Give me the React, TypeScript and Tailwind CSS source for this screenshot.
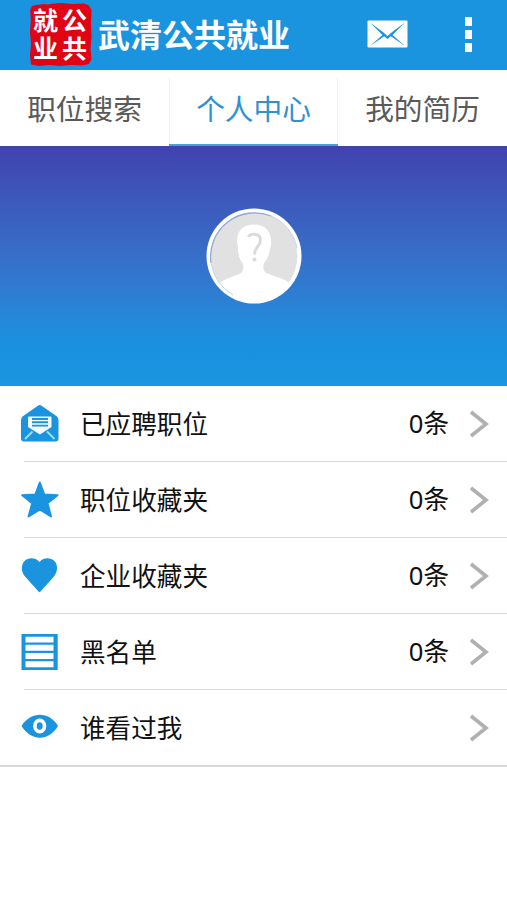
import type { ReactNode } from 'react';

const BLUE = '#1b94e0';

function SealLogo() {
  return (
    <div className="relative -mt-[2px] h-[64px] w-[64px] shrink-0">
      <svg className="absolute inset-0" width="64" height="64" viewBox="0 0 64 64">
        <path
          d="M7 3L15 2L19 2.600L23 1.800L32 1L44 2L55 1.500L60 3.500L62.500 8L62 22L62.500 35L61.500 47L62.500 57L60 62L53 63.500L42 63L31 64L20 63L10 64L2 62.500L1 53L2 42L1 30L1.800 18L1.200 8L3 4Z"
          fill="#e00414"
        />
      </svg>
      <div className="relative grid w-[60px] grid-cols-[25px_25px] gap-x-[4px] pl-[4px] pt-[3px] text-[25px] font-bold leading-[28px] text-white">
        <span>就</span>
        <span>公</span>
        <span>业</span>
        <span>共</span>
      </div>
    </div>
  );
}

function Avatar() {
  return (
    <svg width="96" height="96" viewBox="0 0 96 96">
      <defs>
        <clipPath id="face">
          <circle cx="48" cy="48" r="44" />
        </clipPath>
      </defs>
      <circle cx="48" cy="48" r="47.500" fill="#fff" />
      <circle cx="48" cy="48" r="43.500" fill="#e1e1e1" />
      <g clipPath="url(#face)">
        <path
          d="M48 16.500C37 16.500 31 23 31 33C31 36 32 38 32 41C32 49 35 53 37 56C38 60 37 64 34 65.500C27 69 19 70 14 75L6 96H92L82 74C77 70 66 68 60 65C57 63 57 58 58 55C61 52 63 47 64 41C65 38 65 36 65 33C65 23 59 16.500 48 16.500Z"
          fill="#fff"
        />
      </g>
      <path d="M5 55A44 44 0 0 1 65 8" fill="none" stroke="#91a9d8" strokeWidth="1.300" />
      <path d="M65 8A44 44 0 0 1 91 40M5 55A44 44 0 0 0 27 87" fill="none" stroke="#c3d5ee" strokeWidth="1" />
      <path
        d="M42.500 29C43.500 25 54.500 24.500 54.500 32C54.500 38.500 48.500 39 48.500 46.500"
        fill="none"
        stroke="#dadada"
        strokeWidth="3"
      />
      <circle cx="48.500" cy="51.500" r="2" fill="#dadada" />
    </svg>
  );
}

const icons: Record<string, ReactNode> = {
  letter: (
    <svg width="40" height="40" viewBox="0 0 40 40">
      <path d="M17.500 2Q19.700 .1 22 2L37 12.500Q38.500 14 38.500 16.500V34.500Q38.500 37.500 35.500 37.500H4Q1 37.500 1 34.500V16.500Q1 14 2.500 12.500Z" fill={BLUE} />
      <path d="M8 13.500Q8 12.500 9 12.500H30.500Q31.500 12.500 31.500 13.500V23L20 30.500L8 23Z" fill="#f4fbff" />
      <path d="M12 15H28M12 18.300H28M12 21.600H28" stroke={BLUE} strokeWidth="1.900" />
      <path d="M5 35L12.500 27.500M34.500 35L27 27.500" stroke="#9be0ff" strokeWidth="1.800" />
    </svg>
  ),
  star: (
    <svg width="40" height="40" viewBox="0 0 40 40">
      <path
        d="M19.800 2.500L24.300 14.500L37.500 15.300L27.500 23.300L31 36.500L19.800 29.500L8.600 36.500L12.200 23.300L2.200 15.300L15.300 14.500Z"
        fill={BLUE}
        stroke={BLUE}
        strokeWidth="2"
        strokeLinejoin="round"
      />
    </svg>
  ),
  heart: (
    <svg width="40" height="40" viewBox="0 0 40 40">
      <path
        d="M19.500 6.500C16.500 1.800 8.500 1.300 4.500 5.500C.5 10 1.200 17 5.500 21.500L18.700 36.300Q19.500 37.200 20.300 36.300L33.500 21.500C37.500 17 38.500 10 34.500 5.500C30.500 1.300 22.500 1.800 19.500 6.500Z"
        transform="translate(0 -.5)"
        fill={BLUE}
      />
    </svg>
  ),
  list: (
    <svg width="40" height="40" viewBox="0 0 40 40">
      <path d="M1.500 2H37.700V38H1.500Z" fill={BLUE} />
      <path d="M5.500 4.800H33.500V10.600H5.500ZM5.500 12.800H33.500V18.800H5.500ZM5.500 21H33.500V27H5.500ZM5.500 29.200H33.500V35.300H5.500Z" fill="#fff" />
    </svg>
  ),
  eye: (
    <svg width="40" height="40" viewBox="0 0 40 40">
      <path d="M1.500 18C11 3 29 3 38 18C29 33.500 11 33.500 1.500 18Z" fill={BLUE} />
      <ellipse cx="19.700" cy="18" rx="4.800" ry="5.600" fill={BLUE} stroke="#fff" strokeWidth="3.600" />
    </svg>
  ),
};

const rows = [
  { icon: 'letter', label: '已应聘职位', count: 0 },
  { icon: 'star', label: '职位收藏夹', count: 0 },
  { icon: 'heart', label: '企业收藏夹', count: 0 },
  { icon: 'list', label: '黑名单', count: 0 },
  { icon: 'eye', label: '谁看过我', count: null },
];

export default function App() {
  return (
    <div className="flex h-[900px] w-[507px] flex-col overflow-hidden bg-white font-['Noto_Sans_CJK_SC',sans-serif]">
      <header className="flex h-[70px] shrink-0 items-center bg-[#1b94e0] pl-[29px] pr-[35px]">
        <SealLogo />
        <h1 className="ml-[5px] pb-[3px] text-[32px] font-bold leading-[67px] text-white">武清公共就业</h1>
        <svg className="-mt-[3px] ml-auto" width="41" height="28" viewBox="0 0 41 28">
          <rect x=".5" y=".5" width="40" height="27" rx="1" fill="#fff" />
          <path
            d="M3 2.500L16.500 12.500L20.500 16L24.500 12.500L38 2.500L25.500 15L38 26L23.800 16.300L20.500 19L17.200 16.300L3 26L15.500 15Z"
            fill={BLUE}
          />
        </svg>
        <div className="-mt-[2px] ml-[57px] flex flex-col gap-1">
          <i className="h-[9px] w-[7px] bg-white" />
          <i className="h-[9px] w-[7px] bg-white" />
          <i className="h-[9px] w-[7px] bg-white" />
        </div>
      </header>

      <nav className="grid h-[76px] shrink-0 grid-cols-3 text-center text-[28.700px] leading-[75px] text-[#5a5a5a]">
        <span>职位搜索</span>
        <span className="flex h-[76px] flex-col">
          <span className="mt-[8px] h-[66px] border-x border-[#f0f0f0] text-[#3290cf]">
            <span className="-mt-[8px] block">个人中心</span>
          </span>
          <span className="h-[2px] bg-[#4a9fd5]" />
        </span>
        <span>我的简历</span>
      </nav>

      <section className="flex h-[240px] shrink-0 justify-center bg-linear-to-b from-[#4042ad] from-0% via-[#1b8fdd] via-80% to-[#1b96e1] pt-[62px]">
        <Avatar />
      </section>

      <ul>
        {rows.map((row, i) => (
          <li key={row.label}>
            <div className="flex h-[75px] items-center pl-5 pr-[18px] pt-px text-[25.600px] text-[#111]">
              {icons[row.icon]}
              <span className="ml-5 pb-[2px]">{row.label}</span>
              <span className="ml-auto pb-[2px]">
                {row.count !== null && (
                  <>
                    <span className="font-['Noto_Sans',sans-serif]">{row.count}</span>条
                  </>
                )}
              </span>
              <svg className="ml-5" width="20" height="28" viewBox="0 0 20 28">
                <path d="M2 2L17 14L2 26" fill="none" stroke="#b0b0b0" strokeWidth="3.600" />
              </svg>
            </div>
            <div className={i < rows.length - 1 ? 'ml-6 h-px bg-[#d9d9d9]' : 'h-[2px] bg-[#d8d8d8]'} />
          </li>
        ))}
      </ul>
    </div>
  );
}
